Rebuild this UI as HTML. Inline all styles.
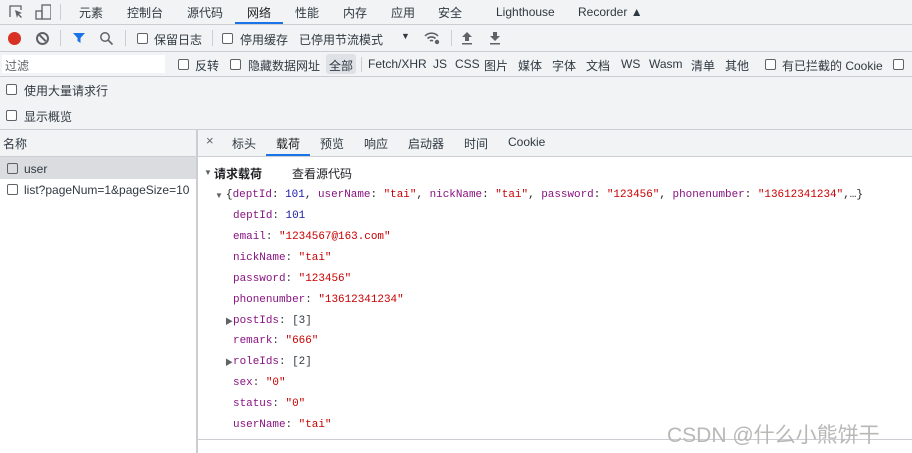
<!DOCTYPE html>
<html><head><meta charset="utf-8"><style>
*{margin:0;padding:0;box-sizing:border-box}
body{width:912px;height:453px;overflow:hidden;background:#fff;font-family:"Liberation Sans","Noto Sans CJK SC",sans-serif;font-size:12px;color:#303942;position:relative}
.a{position:absolute;white-space:nowrap}
.bar{position:absolute;left:0;width:912px;background:#f1f3f4;border-bottom:1px solid #cacdd1}
.cb{position:absolute;width:11px;height:11px;border:1px solid #5f6368;border-radius:2px;background:#fff}
.mono{font-family:"Liberation Mono",monospace;font-size:10.95px}
.k{color:#881280}.s{color:#c80000}.n{color:#1a1aa6}
.vs{position:absolute;width:1px;background:#cacdd1}
</style></head><body>
<div class="bar" style="top:0;height:25px"></div>
<svg class="a" style="left:7px;top:3px" width="44" height="18" viewBox="0 0 44 18"><path d="M3 14V3h11v4" fill="none" stroke="#5f6368" stroke-width="1.3"/><path d="M8 7l7 3-3 1 3 3-1 1-3-3-1 3z" fill="#5f6368"/><rect x="35" y="2" width="9" height="14" fill="none" stroke="#5f6368" stroke-width="1.3"/><rect x="29" y="8" width="6" height="8" fill="none" stroke="#5f6368" stroke-width="1.3"/></svg>
<div class="vs" style="left:60px;top:4px;height:16px"></div>
<div class="a" style="left:79px;top:4px">元素</div>
<div class="a" style="left:127px;top:4px">控制台</div>
<div class="a" style="left:187px;top:4px">源代码</div>
<div class="a" style="left:247px;top:4px;color:#1f1f1f">网络</div>
<div class="a" style="left:235px;top:22px;width:48px;height:2px;background:#1a73e8"></div>
<div class="a" style="left:295px;top:4px">性能</div>
<div class="a" style="left:343px;top:4px">内存</div>
<div class="a" style="left:391px;top:4px">应用</div>
<div class="a" style="left:438px;top:4px">安全</div>
<div class="a" style="left:496px;top:5px">Lighthouse</div>
<div class="a" style="left:578px;top:5px">Recorder ▲</div>
<div class="bar" style="top:25px;height:27px"></div>
<div class="a" style="left:8px;top:32px;width:13px;height:13px;border-radius:50%;background:#d93025"></div>
<div class="a" style="left:36px;top:32px;width:13px;height:13px;border-radius:50%;border:2px solid #5f6368"></div>
<div class="a" style="left:38px;top:37px;width:9px;height:2px;background:#5f6368;transform:rotate(45deg)"></div>
<div class="vs" style="left:60px;top:30px;height:16px"></div>
<svg class="a" style="left:72px;top:31px" width="14" height="14"><path d="M1 2h12l-4.5 5v5l-3-2V7z" fill="#1a73e8"/></svg>
<svg class="a" style="left:99px;top:31px" width="15" height="15"><circle cx="6" cy="6" r="4.2" fill="none" stroke="#5f6368" stroke-width="1.5"/><path d="M9 9l4.5 4.5" stroke="#5f6368" stroke-width="1.6"/></svg>
<div class="vs" style="left:125px;top:30px;height:16px"></div>
<div class="cb" style="left:137px;top:33px"></div><div class="a" style="left:154px;top:31px">保留日志</div>
<div class="vs" style="left:212px;top:30px;height:16px"></div>
<div class="cb" style="left:222px;top:33px"></div><div class="a" style="left:240px;top:31px">停用缓存</div>
<div class="a" style="left:299px;top:31px">已停用节流模式</div>
<div class="a" style="left:401px;top:31px;font-size:9px">▼</div>
<svg class="a" style="left:423px;top:31px" width="18" height="14"><path d="M2 5a9 9 0 0 1 13 0M4.5 7.5a6 6 0 0 1 8 0M7 10a2.5 2.5 0 0 1 3 0" fill="none" stroke="#5f6368" stroke-width="1.6"/><circle cx="14" cy="11" r="2.2" fill="#5f6368"/></svg>
<div class="vs" style="left:451px;top:30px;height:16px"></div>
<svg class="a" style="left:461px;top:31px" width="12" height="14"><path d="M6 1l5 5H8v4H4V6H1z M1 12h10v1.5H1z" fill="#5f6368"/></svg>
<svg class="a" style="left:489px;top:31px" width="12" height="14"><path d="M4 1h4v4h3l-5 5-5-5h3z M1 12h10v1.5H1z" fill="#5f6368"/></svg>
<div class="bar" style="top:52px;height:25px"></div>
<div class="a" style="left:2px;top:55px;width:163px;height:18px;background:#fff;padding:2px 3px;color:#5f6368">过滤</div>
<div class="cb" style="left:178px;top:59px"></div><div class="a" style="left:195px;top:57px">反转</div>
<div class="cb" style="left:230px;top:59px"></div><div class="a" style="left:248px;top:57px">隐藏数据网址</div>
<div class="a" style="left:326px;top:54px;width:30px;height:20px;background:#dee1e6;border-radius:3px"></div>
<div class="a" style="left:329px;top:57px">全部</div>
<div class="vs" style="left:361px;top:57px;height:15px"></div>
<div class="a" style="left:368px;top:57px">Fetch/XHR</div>
<div class="a" style="left:433px;top:57px">JS</div>
<div class="a" style="left:455px;top:57px">CSS</div>
<div class="a" style="left:484px;top:57px">图片</div><div class="a" style="left:518px;top:57px">媒体</div><div class="a" style="left:552px;top:57px">字体</div><div class="a" style="left:586px;top:57px">文档</div>
<div class="a" style="left:621px;top:57px">WS</div><div class="a" style="left:649px;top:57px">Wasm</div>
<div class="a" style="left:691px;top:57px">清单</div><div class="a" style="left:725px;top:57px">其他</div>
<div class="cb" style="left:765px;top:59px"></div><div class="a" style="left:782px;top:57px">有已拦截的 Cookie</div>
<div class="cb" style="left:893px;top:59px"></div>
<div class="bar" style="top:77px;height:53px"></div>
<div class="cb" style="left:6px;top:84px"></div><div class="a" style="left:24px;top:82px">使用大量请求行</div>
<div class="cb" style="left:6px;top:110px"></div><div class="a" style="left:24px;top:108px">显示概览</div>
<div class="a" style="left:0;top:130px;width:196px;height:27px;background:#f1f3f4;border-bottom:1px solid #cacdd1"></div>
<div class="a" style="left:3px;top:135px">名称</div>
<div class="a" style="left:0;top:157px;width:196px;height:22px;background:#dadce0"></div>
<div class="cb" style="left:7px;top:163px;background:transparent"></div><div class="a" style="left:24px;top:162px">user</div>
<div class="cb" style="left:7px;top:184px"></div><div class="a" style="left:24px;top:183px">list?pageNum=1&amp;pageSize=10</div>
<div class="a" style="left:196px;top:130px;width:2px;height:323px;background:#cbcdd1"></div>
<div class="a" style="left:198px;top:130px;width:714px;height:27px;background:#f1f3f4;border-bottom:1px solid #cacdd1"></div>
<div class="a" style="left:206px;top:133px;font-size:13px;color:#5f6368">×</div>
<div class="a" style="left:232px;top:135px">标头</div>
<div class="a" style="left:276px;top:135px;color:#1f1f1f">载荷</div>
<div class="a" style="left:266px;top:154px;width:44px;height:2px;background:#1a73e8"></div>
<div class="a" style="left:320px;top:135px">预览</div>
<div class="a" style="left:364px;top:135px">响应</div>
<div class="a" style="left:408px;top:135px">启动器</div>
<div class="a" style="left:464px;top:135px">时间</div>
<div class="a" style="left:508px;top:135px">Cookie</div>
<div class="a" style="left:204px;top:168px;font-size:8px;color:#5f6368">▼</div>
<div class="a" style="left:214px;top:165px;font-weight:bold;color:#202124">请求载荷</div>
<div class="a" style="left:292px;top:165px;color:#202124">查看源代码</div>
<div class="a" style="left:215px;top:191px;font-size:8px;color:#5f6368">▼</div>
<div class="a mono" style="left:226px;top:189px;color:#222">{<span class="k">deptId</span>: <span class="n">101</span>, <span class="k">userName</span>: <span class="s">"tai"</span>, <span class="k">nickName</span>: <span class="s">"tai"</span>, <span class="k">password</span>: <span class="s">"123456"</span>, <span class="k">phonenumber</span>: <span class="s">"13612341234"</span>,…}</div>
<div class="a mono" style="left:233px;top:210px"><span class="k">deptId</span>: <span class="n">101</span></div>
<div class="a mono" style="left:233px;top:231px"><span class="k">email</span>: <span class="s">"1234567@163.com"</span></div>
<div class="a mono" style="left:233px;top:252px"><span class="k">nickName</span>: <span class="s">"tai"</span></div>
<div class="a mono" style="left:233px;top:273px"><span class="k">password</span>: <span class="s">"123456"</span></div>
<div class="a mono" style="left:233px;top:294px"><span class="k">phonenumber</span>: <span class="s">"13612341234"</span></div>
<div class="a" style="left:225px;top:316px;font-size:8px;color:#5f6368">▶</div>
<div class="a mono" style="left:233px;top:315px"><span class="k">postIds</span>: [3]</div>
<div class="a mono" style="left:233px;top:335px"><span class="k">remark</span>: <span class="s">"666"</span></div>
<div class="a" style="left:225px;top:357px;font-size:8px;color:#5f6368">▶</div>
<div class="a mono" style="left:233px;top:356px"><span class="k">roleIds</span>: [2]</div>
<div class="a mono" style="left:233px;top:377px"><span class="k">sex</span>: <span class="s">"0"</span></div>
<div class="a mono" style="left:233px;top:398px"><span class="k">status</span>: <span class="s">"0"</span></div>
<div class="a mono" style="left:233px;top:419px"><span class="k">userName</span>: <span class="s">"tai"</span></div>
<div class="a" style="left:198px;top:439px;width:714px;height:1px;background:#cacdd1"></div>
<div class="a" style="left:667px;top:419px;font-size:21px;color:#b8b8b8">CSDN @什么小熊饼干</div>
</body></html>
